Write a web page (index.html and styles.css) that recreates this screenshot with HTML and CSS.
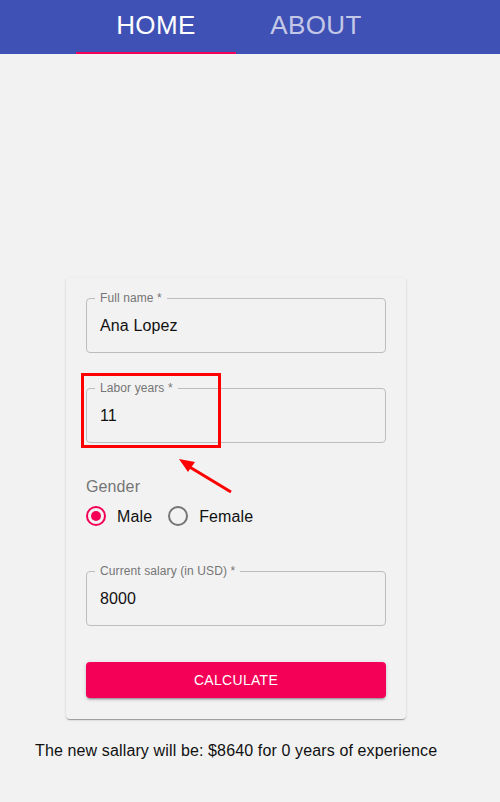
FILE: index.html
```html
<!DOCTYPE html>
<html>
<head>
<meta charset="utf-8">
<link rel="stylesheet" href="styles.css">
</head>
<body>
<header class="appbar">
  <nav class="tabs">
    <div class="tab active">HOME</div>
    <div class="tab">ABOUT</div>
  </nav>
</header>
<main class="main">
  <form class="card">
    <fieldset class="field">
      <legend class="legend">Full name *</legend>
      <div class="value">Ana Lopez</div>
    </fieldset>
    <fieldset class="field field-2">
      <legend class="legend">Labor years *</legend>
      <div class="value">11</div>
    </fieldset>
    <div class="group-label">Gender</div>
    <div class="radios">
      <label class="radio"><span class="ring checked"><span class="dot"></span></span><span class="radio-text">Male</span></label>
      <label class="radio"><span class="ring"></span><span class="radio-text">Female</span></label>
    </div>
    <fieldset class="field field-3">
      <legend class="legend">Current salary (in USD) *</legend>
      <div class="value">8000</div>
    </fieldset>
    <div class="button">CALCULATE</div>
    <div class="annot-box"></div>
    <svg class="annot-arrow" width="70" height="50" viewBox="0 0 70 50">
      <line x1="65" y1="43" x2="22" y2="17" stroke="#ff0000" stroke-width="3"/>
      <polygon points="13,10 29,13 22,23" fill="#ff0000"/>
    </svg>
  </form>
  <p class="result">The new sallary will be: $8640 for 0 years of experience</p>
</main>
</body>
</html>
```
FILE: styles.css
```css
html, body {
  margin: 0;
  padding: 0;
  background: #f2f2f2;
  font-family: "Liberation Sans", Arial, sans-serif;
}
.appbar {
  background: #3f51b5;
  height: 54px;
  box-sizing: border-box;
}
.tabs {
  display: flex;
  padding-left: 76px;
  height: 54px;
}
.tab {
  width: 160px;
  text-align: center;
  font-size: 26px;
  line-height: 50px;
  letter-spacing: 0.4px;
  color: rgba(255, 255, 255, 0.7);
  box-sizing: border-box;
  height: 54px;
}
.tab.active {
  color: #ffffff;
  border-bottom: 2px solid #f50057;
}
.main {
  padding-top: 224px;
}
.card {
  position: relative;
  margin: 0 0 0 66px;
  width: 340px;
  box-sizing: border-box;
  padding: 14px 20px 21px;
  background: #f2f2f2;
  border-radius: 4px;
  box-shadow: 0 2px 1px -1px rgba(0,0,0,0.2), 0 1px 1px 0 rgba(0,0,0,0.14), 0 1px 3px 0 rgba(0,0,0,0.12);
}
.field {
  margin: 0;
  padding: 0 13px 17px;
  border: 1px solid #bdbdbd;
  border-radius: 4px;
  min-width: 0;
}
.field-2 { margin-top: 29px; }
.field-3 { margin-top: 29px; }
.legend {
  font-size: 12px;
  line-height: 12px;
  color: #757575;
  padding: 0 5px;
  margin-left: -5px;
  letter-spacing: 0.1px;
}
.value {
  padding-top: 12px;
  font-size: 16px;
  line-height: 19px;
  color: #111;
  letter-spacing: 0.12px;
}
.group-label {
  margin-top: 34px;
  font-size: 16px;
  line-height: 19px;
  color: #757575;
  letter-spacing: 0.12px;
}
.radios {
  display: flex;
  align-items: center;
  height: 40px;
  gap: 16px;
}
.radio {
  display: flex;
  align-items: center;
  gap: 11px;
}
.ring {
  width: 20px;
  height: 20px;
  box-sizing: border-box;
  border: 2px solid #757575;
  border-radius: 50%;
  display: flex;
  align-items: center;
  justify-content: center;
}
.ring.checked {
  border-color: #f50057;
}
.dot {
  width: 10px;
  height: 10px;
  border-radius: 50%;
  background: #f50057;
}
.radio-text {
  font-size: 16px;
  line-height: 19px;
  color: #111;
  letter-spacing: 0.12px;
}
.button {
  margin-top: 36px;
  height: 36px;
  line-height: 36px;
  background: #f50057;
  color: #fff;
  text-align: center;
  font-size: 14px;
  border-radius: 4px;
  letter-spacing: 0.3px;
  box-shadow: 0 3px 1px -2px rgba(0,0,0,0.2), 0 2px 2px 0 rgba(0,0,0,0.14), 0 1px 5px 0 rgba(0,0,0,0.12);
}
.annot-box {
  position: absolute;
  left: 15px;
  top: 95px;
  width: 140px;
  height: 75px;
  box-sizing: border-box;
  border: 3px solid #ff0000;
}
.annot-arrow {
  position: absolute;
  left: 100px;
  top: 171px;
}
.result {
  margin: 22px 0 0 35px;
  font-size: 16px;
  line-height: 19px;
  color: #111;
  letter-spacing: 0.13px;
}
```
